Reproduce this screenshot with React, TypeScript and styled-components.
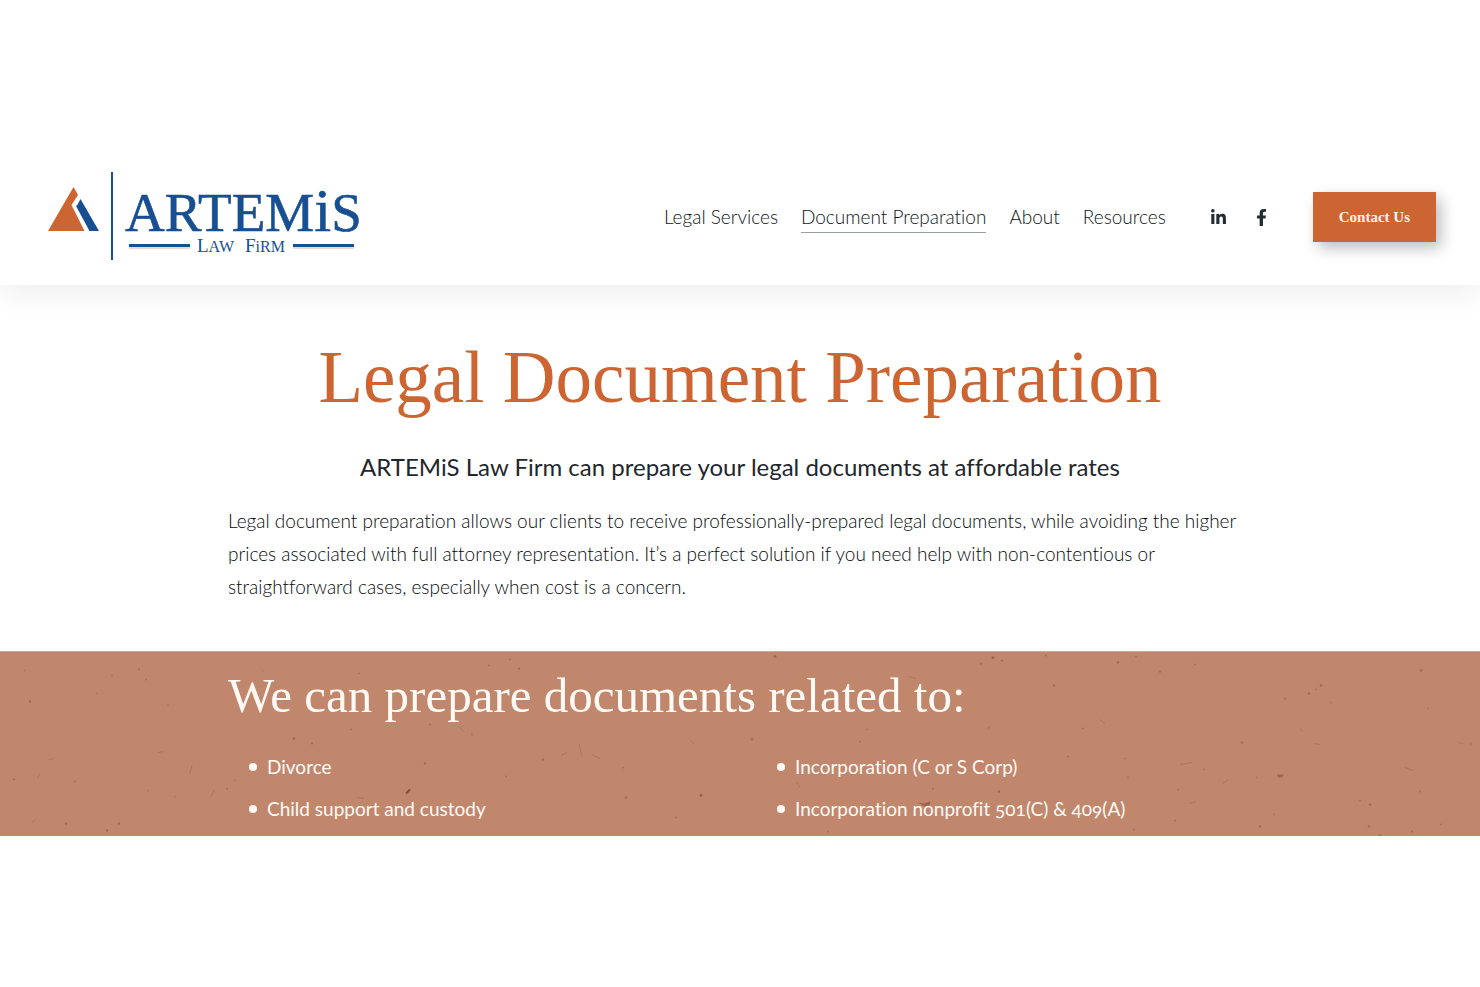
import React from "react";
import styled, { createGlobalStyle } from "styled-components";
import { FaFacebookF, FaLinkedinIn } from "react-icons/fa";

const sans = `Lato, "Open Sans", sans-serif`;
const serif = `"Liberation Serif", "Times New Roman", serif`;
const orange = "#cd6533";
const navy = "#174f92";
const ink = "#1f272d";

const GlobalStyle = createGlobalStyle`
  *, *::before, *::after { box-sizing: border-box; }
  body {
    margin: 0;
    background: #fff;
    color: ${ink};
    font-family: ${sans};
    font-variant-ligatures: none;
  }
  h1, h2, p, ul { margin: 0; padding: 0; }
`;

const Page = styled.div`
  padding: 148px 0;
`;

const Header = styled.header`
  display: flex;
  align-items: center;
  justify-content: space-between;
  min-height: 137px;
  padding: 0 44px 0 48px;
  background: #fff;
  box-shadow: 0 6px 32px rgba(0, 0, 0, 0.08);
  clip-path: inset(0 0 -48px 0);
`;

const LogoLink = styled.a`
  display: block;
  line-height: 0;
`;

const HeaderRight = styled.div`
  display: flex;
  align-items: center;
`;

const Nav = styled.nav`
  display: flex;
  gap: 23px;
  padding-top: 2px;
`;

const NavLink = styled.a<{ $active?: boolean }>`
  color: #0c1318;
  font-size: 19px;
  font-weight: 300;
  line-height: 30px;
  white-space: nowrap;
  text-decoration: none;
  border-bottom: 1px solid ${(p) => (p.$active ? "#9a9fa2" : "transparent")};
`;

const Socials = styled.div`
  display: flex;
  gap: 26px;
  margin: 0 43px 0 44px;
  padding-top: 1px;
`;

const SocialLink = styled.a`
  display: flex;
  color: #222c33;
  font-size: 17px;
`;

const ContactButton = styled.button`
  height: 50px;
  padding: 2px 26px 0;
  border: 0;
  background: ${orange};
  color: #fff3ea;
  font-family: ${serif};
  font-size: 15px;
  font-weight: 700;
  white-space: nowrap;
  box-shadow: 5px 6px 14px rgba(0, 0, 0, 0.26);
`;

const Container = styled.div`
  width: 100%;
  max-width: 1072px;
  margin: 0 auto;
  padding: 0 24px;
`;

const Intro = styled.section`
  padding: 45px 0 48px;
`;

const Title = styled.h1`
  color: ${orange};
  font-family: ${serif};
  font-size: 73px;
  font-weight: 400;
  line-height: 96px;
  text-align: center;
`;

const Lead = styled.p`
  margin-top: 21px;
  font-size: 24px;
  line-height: 40px;
  text-align: center;
`;

const Copy = styled.p`
  margin-top: 17px;
  color: #05090c;
  font-size: 19px;
  font-weight: 300;
  line-height: 33px;
`;

const Band = styled.section`
  position: relative;
  min-height: 185px;
  padding: 12px 0 3px;
  overflow: hidden;
  background: #c0876d;
  border-top: 1px solid #cba797;
  color: #fffaf6;
`;

const Texture = styled.svg`
  position: absolute;
  inset: 0;
  width: 100%;
  height: 100%;
`;

const BandContent = styled(Container)`
  position: relative;
`;

const BandTitle = styled.h2`
  font-family: ${serif};
  font-size: 49px;
  font-weight: 400;
  line-height: 64px;
`;

const Columns = styled.div`
  display: grid;
  grid-template-columns: 1fr 1fr;
  column-gap: 32px;
  margin-top: 18px;
`;

const List = styled.ul`
  list-style: none;
`;

const Item = styled.li`
  display: flex;
  align-items: center;
  gap: 10px;
  padding-left: 21px;
  font-size: 19px;
  line-height: 42px;
  font-variant-numeric: oldstyle-nums;

  &::before {
    content: "";
    width: 8px;
    height: 8px;
    border-radius: 50%;
    background: currentColor;
  }
`;

const navItems = ["Legal Services", "Document Preparation", "About", "Resources"];

const documentLists = [
  ["Divorce", "Child support and custody"],
  ["Incorporation (C or S Corp)", "Incorporation nonprofit 501(C) & 409(A)"],
];

// Paper flecks: x, y, radius, opacity
const flecks: [number, number, number, number][] = [
  [25, 19, 1, 0.2], [112, 24, 1, 0.25], [139, 18, 1, 0.35], [146, 28, 1, 0.3],
  [30, 50, 1.2, 0.4], [97, 42, 1, 0.2], [168, 53, 1, 0.2], [14, 128, 1, 0.4],
  [75, 130, 1, 0.25], [66, 172, 1.2, 0.4], [119, 172, 1.2, 0.4], [107, 179, 1.2, 0.4],
  [148, 139, 1, 0.2], [175, 145, 1, 0.2], [227, 137, 1, 0.35], [235, 129, 1, 0.2],
  [294, 87, 1.4, 0.35], [312, 92, 1.1, 0.35], [351, 78, 1, 0.35], [359, 22, 1, 0.25],
  [430, 73, 1, 0.35], [472, 83, 1, 0.25], [425, 112, 1.3, 0.3], [489, 14, 1, 0.35],
  [510, 8, 1, 0.25], [519, 17, 1.2, 0.35], [543, 108, 1.2, 0.35], [506, 125, 1, 0.3],
  [623, 116, 1, 0.3], [626, 146, 1.4, 0.25], [701, 144, 1.4, 0.5], [676, 166, 1, 0.3],
  [752, 88, 1.4, 0.25], [775, 5, 1.4, 0.45], [860, 90, 1, 0.35], [867, 78, 1, 0.25],
  [933, 137, 1, 0.35], [828, 180, 1, 0.3], [981, 12, 1.2, 0.3], [993, 6, 1.6, 0.4],
  [1002, 9, 1.1, 0.4], [1046, 4, 1, 0.35], [1118, 11, 1.2, 0.4], [1136, 5, 1, 0.25],
  [1160, 20, 1.2, 0.25], [1054, 34, 1.2, 0.35], [1195, 13, 1, 0.25], [1083, 77, 1, 0.3],
  [989, 76, 1.2, 0.2], [1068, 105, 1, 0.35], [1125, 107, 1, 0.25], [1128, 126, 1, 0.25],
  [999, 140, 1.2, 0.45], [1242, 91, 1.5, 0.25], [1309, 42, 1.2, 0.4], [1321, 34, 1.3, 0.4],
  [1316, 38, 1, 0.25], [1285, 47, 1.1, 0.25], [1421, 19, 1.6, 0.3], [1428, 57, 1, 0.2],
  [1331, 51, 1, 0.2], [1204, 118, 1, 0.25], [1257, 126, 1, 0.2], [1420, 140, 1, 0.35],
  [1370, 153, 1.3, 0.4], [1360, 149, 1, 0.25], [1260, 175, 1.4, 0.3], [1369, 175, 1.3, 0.35],
  [1175, 169, 1, 0.3], [1274, 163, 1, 0.2], [1412, 180, 1.3, 0.3], [1471, 92, 1.2, 0.2],
  [1134, 178, 1, 0.25], [1178, 138, 1, 0.2], [1380, 184, 1.5, 0.3], [1441, 173, 1, 0.25],
];

const fibres =
  "M49 108l5-1M37 127l3-5M190 122l2-8M211 145l3-6M32 171l3-3M158 101l5-1M357 146l7 1M459 75l5 5M561 104l6-3 M579 92l3 13M592 103l8 4M909 25l7 2M797 131l3 5M1180 113l12-2M1190 152l6-2M1223 132l5-4M1314 92l6 1M1405 116l8 3M1100 68l5 4M1300 77l3 3M1458 91l5 1M262 18l2 3M690 88l4 5";

function Logo() {
  return (
    <svg width="320" height="90" viewBox="0 1 320 90" role="img" aria-label="ARTEMiS Law Firm">
      <path d="M0 60L25.500 16L30 24L23.500 34L36.500 60Z" fill={orange} />
      <path d="M29 34.500L32.500 28L51 60H41.500L28 35Z" fill={navy} />
      <rect x="63" y="1" width="2" height="88" fill={navy} />
      <text x="77" y="60" fill={navy} stroke={navy} strokeWidth="0.6" fontFamily={serif} fontSize="55">
        ARTEM<tspan fontSize="61">i</tspan>S
      </text>
      <path d="M81 75.500H142M245 75.500H306" stroke="#f0d8cb" strokeWidth="5" />
      <path d="M81 74.500H142M245 74.500H306" stroke={navy} strokeWidth="3" />
      <text x="149" y="81" fill={navy} fontFamily={serif} fontSize="19">
        L<tspan fontSize="16">AW</tspan>
      </text>
      <text x="197" y="81" fill={navy} fontFamily={serif} fontSize="19">
        F<tspan fontSize="16">iRM</tspan>
      </text>
    </svg>
  );
}

export default function App() {
  return (
    <>
      <GlobalStyle />
      <Page>
        <Header>
          <LogoLink href="#home">
            <Logo />
          </LogoLink>
          <HeaderRight>
            <Nav aria-label="Main">
              {navItems.map((item) => (
                <NavLink key={item} href="#" $active={item === "Document Preparation"}>
                  {item}
                </NavLink>
              ))}
            </Nav>
            <Socials>
              <SocialLink href="#linkedin" aria-label="LinkedIn">
                <FaLinkedinIn />
              </SocialLink>
              <SocialLink href="#facebook" aria-label="Facebook">
                <FaFacebookF />
              </SocialLink>
            </Socials>
            <ContactButton type="button">Contact Us</ContactButton>
          </HeaderRight>
        </Header>
        <main>
          <Intro>
            <Container>
              <Title>Legal Document Preparation</Title>
              <Lead>ARTEMiS Law Firm can prepare your legal documents at affordable rates</Lead>
              <Copy>
                Legal document preparation allows our clients to receive professionally-prepared legal documents,
                while avoiding the higher prices associated with full attorney representation. It’s a perfect
                solution if you need help with non-contentious or straightforward cases, especially when cost is a
                concern.
              </Copy>
            </Container>
          </Intro>
          <Band>
            <Texture viewBox="0 0 1480 185" preserveAspectRatio="xMidYMid slice" aria-hidden="true">
              {flecks.map(([x, y, r, opacity]) => (
                <circle key={`${x}-${y}`} cx={x} cy={y} r={r} fill="#713c28" opacity={opacity} />
              ))}
              <path d={fibres} fill="none" stroke="#8a543d" strokeWidth="1" opacity="0.35" />
              <path d="M406 142l4-4" stroke="#6b3420" strokeWidth="2" opacity="0.7" />
              <path d="M1277 123h7l-2 3h-4z" fill="#8a4f38" opacity="0.6" />
              <path d="M918 151l6 1 6-2v3l-5 2z" fill="#7a4129" opacity="0.5" />
            </Texture>
            <BandContent>
              <BandTitle>We can prepare documents related to:</BandTitle>
              <Columns>
                {documentLists.map((list) => (
                  <List key={list[0]}>
                    {list.map((entry) => (
                      <Item key={entry}>{entry}</Item>
                    ))}
                  </List>
                ))}
              </Columns>
            </BandContent>
          </Band>
        </main>
      </Page>
    </>
  );
}
